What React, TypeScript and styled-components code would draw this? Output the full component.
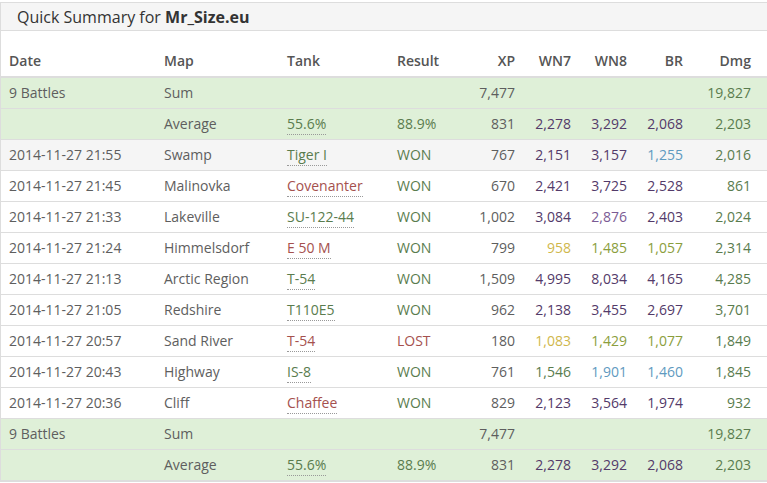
import React from 'react';
import styled, { createGlobalStyle } from 'styled-components';

const GlobalStyle = createGlobalStyle`
   html, body {
      margin: 0;
      padding: 0;
      overflow: hidden;
      background: #fff;
   }
   body {
      font-family: "Open Sans", "Liberation Sans", sans-serif;
      font-size: 14px;
      color: #555;
   }
`;

const Wrapper = styled.div`
   padding-top: 2px;
`;

const Panel = styled.div`
   width: 768px;
   border: 1px solid #ddd;
   border-right: none;
`;

const Heading = styled.div`
   background-color: #f5f5f5;
   border-bottom: 1px solid #ddd;
   padding: 4px 16px 3px;
   font-size: 16px;
   line-height: 20px;
   color: #333;

   strong {
      font-weight: 700;
   }
`;

const Table = styled.table`
   width: 767px;
   table-layout: fixed;
   border-collapse: collapse;
   border-spacing: 0;
`;

const Th = styled.th<{ $right?: boolean; $last?: boolean }>`
   padding: 20px ${({ $last }) => ($last ? '17px' : '8px')} 5px 8px;
   line-height: 20px;
   font-weight: 600;
   color: #555;
   text-align: ${({ $right }) => ($right ? 'right' : 'left')};
   border-bottom: 2px solid #ddd;
   white-space: nowrap;
`;

const Row = styled.tr<{ $summary?: boolean; $hover?: boolean }>`
   background-color: ${({ $summary, $hover }) =>
      $summary ? '#dff0d8' : $hover ? '#f5f5f5' : '#fff'};
`;

const Td = styled.td<{ $right?: boolean; $last?: boolean; $color?: string }>`
   padding: 5px ${({ $last }) => ($last ? '17px' : '8px')} 5px 8px;
   line-height: 20px;
   border-bottom: 1px solid #ddd;
   text-align: ${({ $right }) => ($right ? 'right' : 'left')};
   color: ${({ $color }) => $color || '#5e5e5e'};
   white-space: nowrap;
   overflow: hidden;
`;

const Dotted = styled.span<{ $color: string }>`
   color: ${({ $color }) => $color};
   border-bottom: 1px dotted #999;
   padding-bottom: 1px;
`;

const C = {
   green: '#5a7c4e',
   red: '#a5514e',
   purple: '#533a69',
   violet: '#7b5b94',
   yellow: '#d0b74c',
   lime: '#8b9e3d',
   blue: '#5f9ac0',
   dmg: '#5a7c4e',
};

const cols = [
   { title: 'Date', width: 155 },
   { title: 'Map', width: 123 },
   { title: 'Tank', width: 110 },
   { title: 'Result', width: 78 },
   { title: 'XP', width: 56, right: true },
   { title: 'WN7', width: 56, right: true },
   { title: 'WN8', width: 56, right: true },
   { title: 'BR', width: 56, right: true },
   { title: 'Dmg', width: 77, right: true },
];

type Stat = [string, string];

interface Battle {
   date: string;
   map: string;
   tank: Stat;
   result: Stat;
   xp: string;
   wn7: Stat;
   wn8: Stat;
   br: Stat;
   dmg: string;
}

const battles: Battle[] = [
   { date: '2014-11-27 21:55', map: 'Swamp', tank: ['Tiger I', C.green], result: ['WON', C.green], xp: '767', wn7: ['2,151', C.purple], wn8: ['3,157', C.purple], br: ['1,255', C.blue], dmg: '2,016' },
   { date: '2014-11-27 21:45', map: 'Malinovka', tank: ['Covenanter', C.red], result: ['WON', C.green], xp: '670', wn7: ['2,421', C.purple], wn8: ['3,725', C.purple], br: ['2,528', C.purple], dmg: '861' },
   { date: '2014-11-27 21:33', map: 'Lakeville', tank: ['SU-122-44', C.green], result: ['WON', C.green], xp: '1,002', wn7: ['3,084', C.purple], wn8: ['2,876', C.violet], br: ['2,403', C.purple], dmg: '2,024' },
   { date: '2014-11-27 21:24', map: 'Himmelsdorf', tank: ['E 50 M', C.red], result: ['WON', C.green], xp: '799', wn7: ['958', C.yellow], wn8: ['1,485', C.lime], br: ['1,057', C.lime], dmg: '2,314' },
   { date: '2014-11-27 21:13', map: 'Arctic Region', tank: ['T-54', C.green], result: ['WON', C.green], xp: '1,509', wn7: ['4,995', C.purple], wn8: ['8,034', C.purple], br: ['4,165', C.purple], dmg: '4,285' },
   { date: '2014-11-27 21:05', map: 'Redshire', tank: ['T110E5', C.green], result: ['WON', C.green], xp: '962', wn7: ['2,138', C.purple], wn8: ['3,455', C.purple], br: ['2,697', C.purple], dmg: '3,701' },
   { date: '2014-11-27 20:57', map: 'Sand River', tank: ['T-54', C.red], result: ['LOST', C.red], xp: '180', wn7: ['1,083', C.yellow], wn8: ['1,429', C.lime], br: ['1,077', C.lime], dmg: '1,849' },
   { date: '2014-11-27 20:43', map: 'Highway', tank: ['IS-8', C.green], result: ['WON', C.green], xp: '761', wn7: ['1,546', C.green], wn8: ['1,901', C.blue], br: ['1,460', C.blue], dmg: '1,845' },
   { date: '2014-11-27 20:36', map: 'Cliff', tank: ['Chaffee', C.red], result: ['WON', C.green], xp: '829', wn7: ['2,123', C.purple], wn8: ['3,564', C.purple], br: ['1,974', C.purple], dmg: '932' },
];

const SummaryRows = () => (
   <>
      <Row $summary>
         <Td>9 Battles</Td>
         <Td>Sum</Td>
         <Td />
         <Td />
         <Td $right>7,477</Td>
         <Td $right />
         <Td $right />
         <Td $right />
         <Td $right $last $color={C.dmg}>19,827</Td>
      </Row>
      <Row $summary>
         <Td />
         <Td>Average</Td>
         <Td><Dotted $color={C.green}>55.6%</Dotted></Td>
         <Td $color={C.green}>88.9%</Td>
         <Td $right>831</Td>
         <Td $right $color={C.purple}>2,278</Td>
         <Td $right $color={C.purple}>3,292</Td>
         <Td $right $color={C.purple}>2,068</Td>
         <Td $right $last $color={C.dmg}>2,203</Td>
      </Row>
   </>
);

export default function App() {
   return (
      <>
         <GlobalStyle />
         <Wrapper>
            <Panel>
               <Heading>
                  Quick Summary for <strong>Mr_Size.eu</strong>
               </Heading>
               <Table>
                  <colgroup>
                     {cols.map(c => <col key={c.title} style={{ width: c.width }} />)}
                  </colgroup>
                  <thead>
                     <tr>
                        {cols.map((c, i) => (
                           <Th key={c.title} $right={c.right} $last={i === cols.length - 1}>{c.title}</Th>
                        ))}
                     </tr>
                  </thead>
                  <tbody>
                     <SummaryRows />
                     {battles.map((b, i) => (
                        <Row key={b.date} $hover={i === 0}>
                           <Td>{b.date}</Td>
                           <Td>{b.map}</Td>
                           <Td><Dotted $color={b.tank[1]}>{b.tank[0]}</Dotted></Td>
                           <Td $color={b.result[1]}>{b.result[0]}</Td>
                           <Td $right>{b.xp}</Td>
                           <Td $right $color={b.wn7[1]}>{b.wn7[0]}</Td>
                           <Td $right $color={b.wn8[1]}>{b.wn8[0]}</Td>
                           <Td $right $color={b.br[1]}>{b.br[0]}</Td>
                           <Td $right $last $color={C.dmg}>{b.dmg}</Td>
                        </Row>
                     ))}
                     <SummaryRows />
                  </tbody>
               </Table>
            </Panel>
         </Wrapper>
      </>
   );
}
